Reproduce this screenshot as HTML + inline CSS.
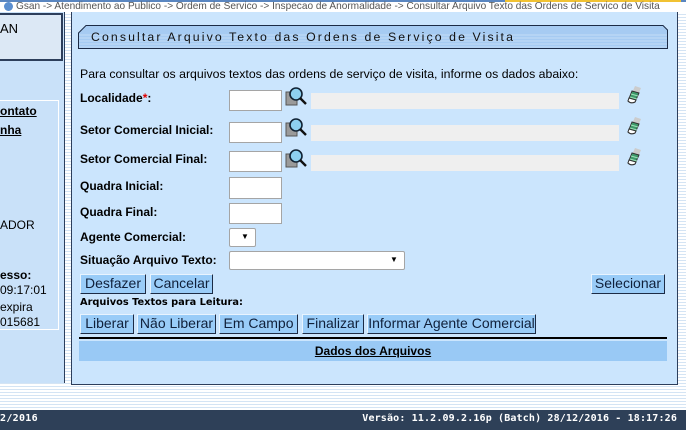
<!DOCTYPE html>
<html><head><meta charset="utf-8"><style>
*{margin:0;padding:0;box-sizing:border-box}
body{width:686px;height:430px;overflow:hidden;position:relative;font-family:"Liberation Sans",Arial,sans-serif;font-size:12px;color:#000;
background:repeating-linear-gradient(180deg,#ffffff 0 2px,#d4e4f4 2px 3px)}
.a{position:absolute;white-space:nowrap}
.lbl{position:absolute;font-weight:bold;font-size:12px;left:80px}
.in{position:absolute;background:#fff;border:1px solid #a5a5a5}
.dis{position:absolute;background:#efefef;left:311px;width:308px;height:16px}
.btn{position:absolute;height:20px;background:#99ccf8;border:1px solid;border-color:#e8f4ff #1c2b45 #1c2b45 #e8f4ff;font-size:14px;line-height:17px;text-align:center;color:#10203a}
</style></head><body>
<div class="a" style="left:0;top:0;width:686px;height:12px;background:#fff;border-top:2px solid #5a86c0"></div>
<div class="a" style="left:505px;top:0;width:176px;height:2px;background:#f1c232"></div>
<div class="a" style="left:4px;top:2px;width:9px;height:9px;border-radius:50%;background:#5b8fd0"></div>
<div class="a" style="left:16px;top:1px;font-size:10.1px;color:#555;line-height:11px">Gsan -&gt; Atendimento ao Publico -&gt; Ordem de Servico -&gt; Inspecao de Anormalidade -&gt; Consultar Arquivo Texto das Ordens de Servico de Visita</div>
<div class="a" style="left:0;top:12px;width:65px;height:371px;background:#c9e1f9;border-right:1px solid #2d3e5b"></div>
<div class="a" style="left:0;top:13px;width:63px;height:48px;background:#dce8f5;border:2px solid #2d3e5b;border-left:none"></div>
<div class="a" style="left:0;top:21px;font-size:13px">AN</div>
<div class="a" style="left:0;top:100px;width:59px;height:230px;border:1px solid #fff;border-left:none"></div>
<div class="a" style="left:0;top:104px;font-size:12px;font-weight:bold;text-decoration:underline">ontato</div>
<div class="a" style="left:0;top:123px;font-size:12px;font-weight:bold;text-decoration:underline">nha</div>
<div class="a" style="left:0;top:218px;font-size:12px">ADOR</div>
<div class="a" style="left:0;top:268px;font-size:12px;font-weight:bold">esso:</div>
<div class="a" style="left:0;top:283px;font-size:12px">09:17:01</div>
<div class="a" style="left:0;top:300px;font-size:12px">expira</div>
<div class="a" style="left:0;top:315px;font-size:12px">015681</div>
<div class="a" style="left:71px;top:12px;width:607px;height:373px;background:#cbe5fd;border:1px solid #2d3e5b;border-top:none"></div>
<svg class="a" style="left:78px;top:25px" width="590" height="25"><path d="M8 .5 H585 L589.5 5 V23.5 H.5 V8 Z" fill="#a6cbf2" stroke="#1c2b45"/><g stroke="#c4dcf6" stroke-width="1"><path d="M1 10H589M1 13H589M1 16H589M1 19H589M1 22H589"/></g></svg>
<div class="a" style="left:91px;top:30px;font-size:12.3px;letter-spacing:2.1px;color:#111">Consultar Arquivo Texto das Ordens de Serviço de Visita</div>
<div class="a" style="left:80px;top:67px;font-size:12.3px">Para consultar os arquivos textos das ordens de serviço de visita, informe os dados abaixo:</div>

<div class="lbl" style="top:91px">Localidade<span style="color:#d00">*</span>:</div>
<div class="lbl" style="top:123px">Setor Comercial Inicial:</div>
<div class="lbl" style="top:152px">Setor Comercial Final:</div>
<div class="lbl" style="top:179px">Quadra Inicial:</div>
<div class="lbl" style="top:205px">Quadra Final:</div>
<div class="lbl" style="top:230px">Agente Comercial:</div>
<div class="lbl" style="top:253px">Situação Arquivo Texto:</div>

<div class="in" style="left:229px;top:90px;width:53px;height:21px"></div>
<div class="in" style="left:229px;top:122px;width:53px;height:21px"></div>
<div class="in" style="left:229px;top:151px;width:53px;height:21px"></div>
<div class="in" style="left:229px;top:177px;width:53px;height:22px"></div>
<div class="in" style="left:229px;top:203px;width:53px;height:21px"></div>
<div class="in" style="left:229px;top:228px;width:27px;height:19px;border-radius:2px"><span style="position:absolute;left:11px;top:3px;font-size:8px">▼</span></div>
<div class="in" style="left:229px;top:251px;width:176px;height:19px;border-radius:2px"><span style="position:absolute;left:160px;top:3px;font-size:8px">▼</span></div>

<div class="dis" style="top:93px"></div>
<div class="dis" style="top:125px"></div>
<div class="dis" style="top:155px"></div>

<svg class="a" style="left:285px;top:86px" width="24" height="24"><rect x="1" y="6" width="11" height="13" fill="#9a9a9a" stroke="#555"/><circle cx="11" cy="8" r="6" fill="#8ed0f0" stroke="#123" stroke-width="1.6"/><path d="M15 12 L21 18" stroke="#111" stroke-width="2.4"/></svg>
<svg class="a" style="left:285px;top:117px" width="24" height="24"><rect x="1" y="6" width="11" height="13" fill="#9a9a9a" stroke="#555"/><circle cx="11" cy="8" r="6" fill="#8ed0f0" stroke="#123" stroke-width="1.6"/><path d="M15 12 L21 18" stroke="#111" stroke-width="2.4"/></svg>
<svg class="a" style="left:285px;top:148px" width="24" height="24"><rect x="1" y="6" width="11" height="13" fill="#9a9a9a" stroke="#555"/><circle cx="11" cy="8" r="6" fill="#8ed0f0" stroke="#123" stroke-width="1.6"/><path d="M15 12 L21 18" stroke="#111" stroke-width="2.4"/></svg>
<svg class="a" style="left:625px;top:85px" width="18" height="20"><path d="M10 1 L16 3 L13 10 L7 8 Z" fill="#ccc"/><path d="M7 6 L14 8 L10 17 Q6 19 3 16 Z" fill="#3d9a6a" stroke="#333"/><path d="M6 9 L13 11 M5 12 L12 14" stroke="#9de0b8"/><path d="M4 13 L11 15 L10 17 Q6 19 3 16 Z" fill="#fff" stroke="#333"/></svg>
<svg class="a" style="left:625px;top:116px" width="18" height="20"><path d="M10 1 L16 3 L13 10 L7 8 Z" fill="#ccc"/><path d="M7 6 L14 8 L10 17 Q6 19 3 16 Z" fill="#3d9a6a" stroke="#333"/><path d="M6 9 L13 11 M5 12 L12 14" stroke="#9de0b8"/><path d="M4 13 L11 15 L10 17 Q6 19 3 16 Z" fill="#fff" stroke="#333"/></svg>
<svg class="a" style="left:625px;top:147px" width="18" height="20"><path d="M10 1 L16 3 L13 10 L7 8 Z" fill="#ccc"/><path d="M7 6 L14 8 L10 17 Q6 19 3 16 Z" fill="#3d9a6a" stroke="#333"/><path d="M6 9 L13 11 M5 12 L12 14" stroke="#9de0b8"/><path d="M4 13 L11 15 L10 17 Q6 19 3 16 Z" fill="#fff" stroke="#333"/></svg>

<div class="btn" style="left:80px;top:274px;width:66px">Desfazer</div>
<div class="btn" style="left:150px;top:274px;width:63px">Cancelar</div>
<div class="btn" style="left:591px;top:274px;width:74px">Selecionar</div>
<div class="a" style="left:80px;top:297px;font-family:'DejaVu Sans',sans-serif;font-weight:bold;font-size:9.8px">Arquivos Textos para Leitura:</div>
<div class="btn" style="left:80px;top:314px;width:54px">Liberar</div>
<div class="btn" style="left:137px;top:314px;width:79px">Não Liberar</div>
<div class="btn" style="left:219px;top:314px;width:79px">Em Campo</div>
<div class="btn" style="left:302px;top:314px;width:62px">Finalizar</div>
<div class="btn" style="left:367px;top:314px;width:169px">Informar Agente Comercial</div>
<div class="a" style="left:79px;top:337px;width:588px;height:2px;background:#000"></div>
<div class="a" style="left:79px;top:341px;width:588px;height:20px;background:#99c9f5;text-align:center;font-weight:bold;font-size:12px;line-height:20px"><span style="text-decoration:underline">Dados dos Arquivos</span></div>
<div class="a" style="left:0;top:410px;width:686px;height:20px;background:#2e4058"></div>
<div class="a" style="left:0;top:413px;font-family:'DejaVu Sans Mono',monospace;font-weight:bold;font-size:10px;color:#fff;letter-spacing:0.3px">2/2016</div>
<div class="a" style="right:9px;top:413px;font-family:'DejaVu Sans Mono',monospace;font-weight:bold;font-size:10px;color:#fff;letter-spacing:0.15px">Versão: 11.2.09.2.16p (Batch) 28/12/2016 - 18:17:26</div>
</body></html>
